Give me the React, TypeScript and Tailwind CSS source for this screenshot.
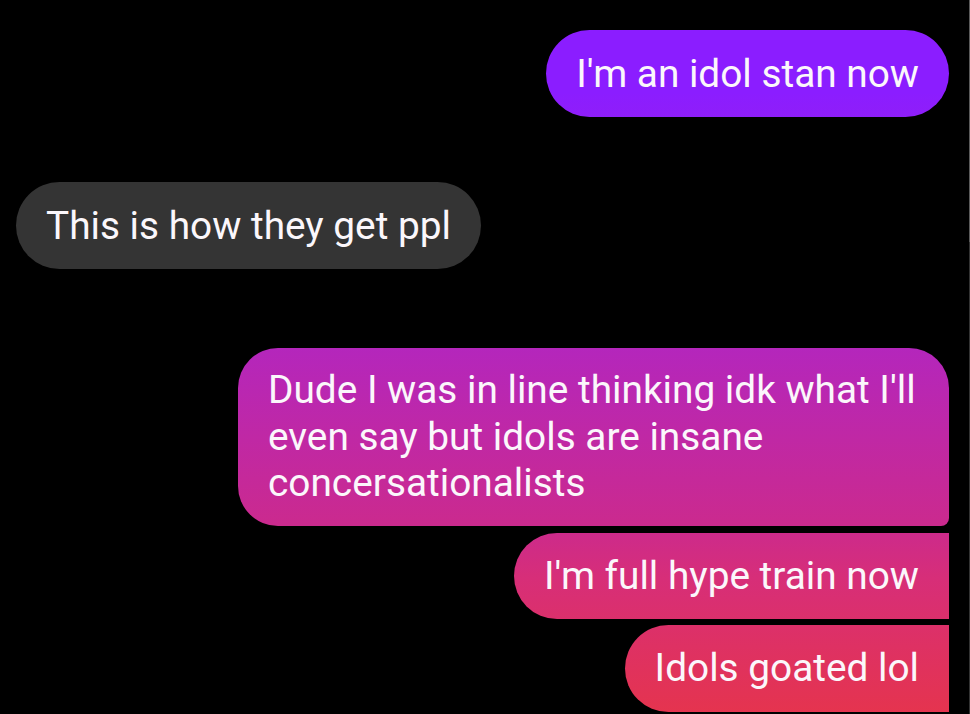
import React from 'react'

type Message = {
  id: number
  text: React.ReactNode
  sender: 'me' | 'them'
  className: string
}

// one gradient pinned to the viewport, like messenger does it
const meBg =
  'bg-fixed bg-[linear-gradient(to_bottom,#8b1dff_0%,#8b1dff_13%,#b426bc_48.7%,#cb2a8e_73.5%,#d72e78_81%,#e5344e_100%)]'

const messages: Message[] = [
  {
    id: 1,
    text: "I'm an idol stan now",
    sender: 'me',
    className: 'mt-[30px] rounded-full pt-[21px] pb-[21px]',
  },
  {
    id: 2,
    text: 'This is how they get ppl',
    sender: 'them',
    className: 'mt-[65px] rounded-full pt-[21px] pb-[21px]',
  },
  {
    id: 3,
    text: (
      <>
        Dude I was in line thinking idk what I'll
        <br />
        even say but idols are insane
        <br />
        concersationalists
      </>
    ),
    sender: 'me',
    className:
      'mt-[79px] w-[711px] rounded-[40px] rounded-br-[8px] pt-[19px] pb-[19px] leading-[46.5px]',
  },
  {
    id: 4,
    text: "I'm full hype train now",
    sender: 'me',
    className: 'mt-[7px] rounded-l-full rounded-r-[8px] pt-[20px] pb-[21px]',
  },
  {
    id: 5,
    text: 'Idols goated lol',
    sender: 'me',
    className: 'mt-[6px] rounded-l-full rounded-r-[8px] pt-[20px] pb-[22px]',
  },
]

const Bubble = ({ text, sender, className }: Message) => {
  const isMe = sender === 'me'
  return (
    <div
      className={`${className} ${
        isMe ? `self-end ${meBg}` : 'self-start bg-[#343434]'
      } whitespace-nowrap px-[30px] text-[38.8px] leading-[45px] text-[#fbf7fb]`}
    >
      {text}
    </div>
  )
}

const App = () => {
  return (
    <div
      className="flex h-[714px] w-full overflow-hidden bg-black"
      style={{ fontFamily: 'Roboto, "Noto Sans", sans-serif' }}
    >
      <div className="flex flex-1 flex-col pl-4 pr-[20px]">
        {messages.map((msg) => (
          <Bubble key={msg.id} {...msg} />
        ))}
      </div>
      <div className="flex w-px flex-col">
        <div className="h-[242px] bg-[#5a5a5a]" />
        <div className="flex-1 bg-[#333333]" />
      </div>
    </div>
  )
}

export default App
